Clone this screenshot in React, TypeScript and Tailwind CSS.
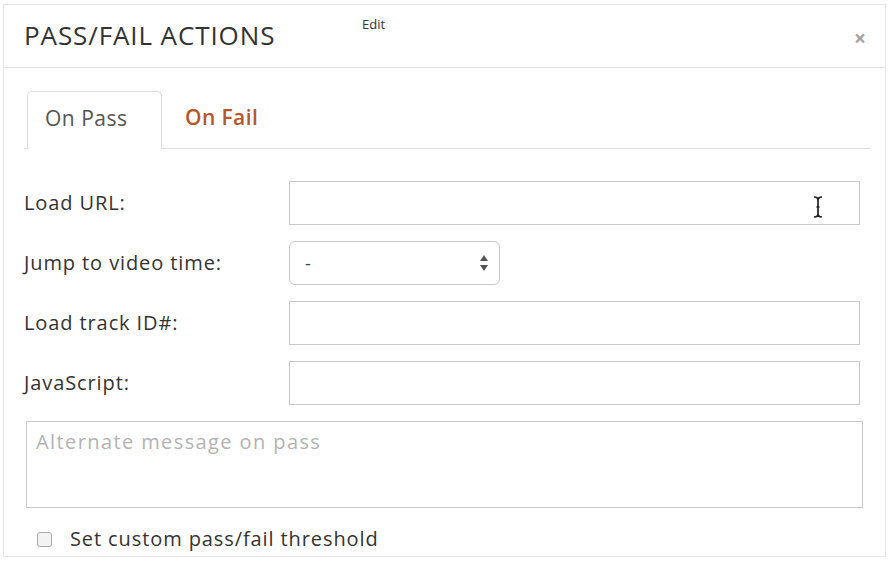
import React from "react";

function Row({ label, children }: { label: string; children: React.ReactNode }) {
  return (
    <div className="flex items-center h-[44px]">
      <div className="w-[265px] shrink-0 text-[20px] font-medium tracking-[0.9px] text-[#333]">{label}</div>
      {children}
    </div>
  );
}

function TextInput({ cursor }: { cursor?: boolean }) {
  return (
    <div className="relative w-[571px] h-[44px] border border-[#c9c9c9] bg-white">
      {cursor && (
        <svg className="absolute left-[523px] top-[14px]" width="10" height="22" viewBox="0 0 10 22">
          <path d="M1 1 Q5 1 5 4 Q5 1 9 1 M5 4 V18 M1 21 Q5 21 5 18 Q5 21 9 21 M3.5 11 H6.5" stroke="#222" strokeWidth="1.7" fill="none" />
        </svg>
      )}
    </div>
  );
}

export default function App() {
  return (
    <div className="w-[889px] h-[563px] bg-white overflow-hidden" style={{ fontFamily: '"Open Sans", sans-serif' }}>
      <div className="ml-[3px] mt-[4px] w-[883px] h-[553px] border border-[#e6e6e6] bg-white">
        {/* Header */}
        <div className="relative h-[63px] flex items-center pl-[20px] pr-[19px] border-b border-[#e2e2e2]">
          <h1 className="text-[26px] font-medium text-[#333] tracking-[0.9px] mt-[-2px]">PASS/FAIL ACTIONS</h1>
          <span className="absolute left-[358px] top-[10px] text-[13px] text-[#333]">Edit</span>
          <span className="ml-auto text-[21px] leading-none text-[#a5a5a5] font-bold mt-[4px]">×</span>
        </div>

        {/* Body */}
        <div className="pl-[20px] pr-[22px] pt-[22px]">
          {/* Tabs */}
          <div className="flex items-end border-b border-[#dcdcdc] mr-[-8px]">
            <div className="ml-[3px] w-[135px] h-[58px] border border-b-0 border-[#dcdcdc] rounded-t-[5px] bg-white mb-[-1px] flex items-center pl-[17px] pb-[3px] text-[21px] tracking-[0.5px] text-[#555]">
              On Pass
            </div>
            <div className="h-[58px] flex items-center pl-[23px] pb-[3px] text-[21px] tracking-[0.4px] font-semibold text-[#b4582c]">On Fail</div>
          </div>

          {/* Fields */}
          <div className="mt-[32px] flex flex-col gap-[16px]">
            <Row label="Load URL:">
              <TextInput cursor />
            </Row>
            <Row label="Jump to video time:">
              <div className="w-[211px] h-[44px] border border-[#c9c9c9] rounded-[6px] flex items-center pl-[15px] pr-[10px] text-[18px] text-[#444]">
                <span>-</span>
                <svg className="ml-auto" width="10" height="18" viewBox="0 0 10 18">
                  <path d="M1 7 L5 1 L9 7 Z M1 11 L5 17 L9 11 Z" fill="#555" />
                </svg>
              </div>
            </Row>
            <Row label="Load track ID#:">
              <TextInput />
            </Row>
            <Row label="JavaScript:">
              <TextInput />
            </Row>
            <div className="ml-[2px] w-[837px] h-[87px] border border-[#c9c9c9] pl-[9px] pt-[5px] text-[20px] tracking-[1.4px] text-[#b3b3b3]">
              Alternate message on pass
            </div>
            <div className="flex items-center h-[26px] pl-[13px] mt-[2px]">
              <span className="w-[15px] h-[15px] border border-[#aaa] rounded-[3px] bg-[#f3f3f3]" />
              <span className="ml-[18px] text-[20px] font-medium tracking-[0.9px] text-[#333]">Set custom pass/fail threshold</span>
            </div>
          </div>
        </div>
      </div>
    </div>
  );
}
